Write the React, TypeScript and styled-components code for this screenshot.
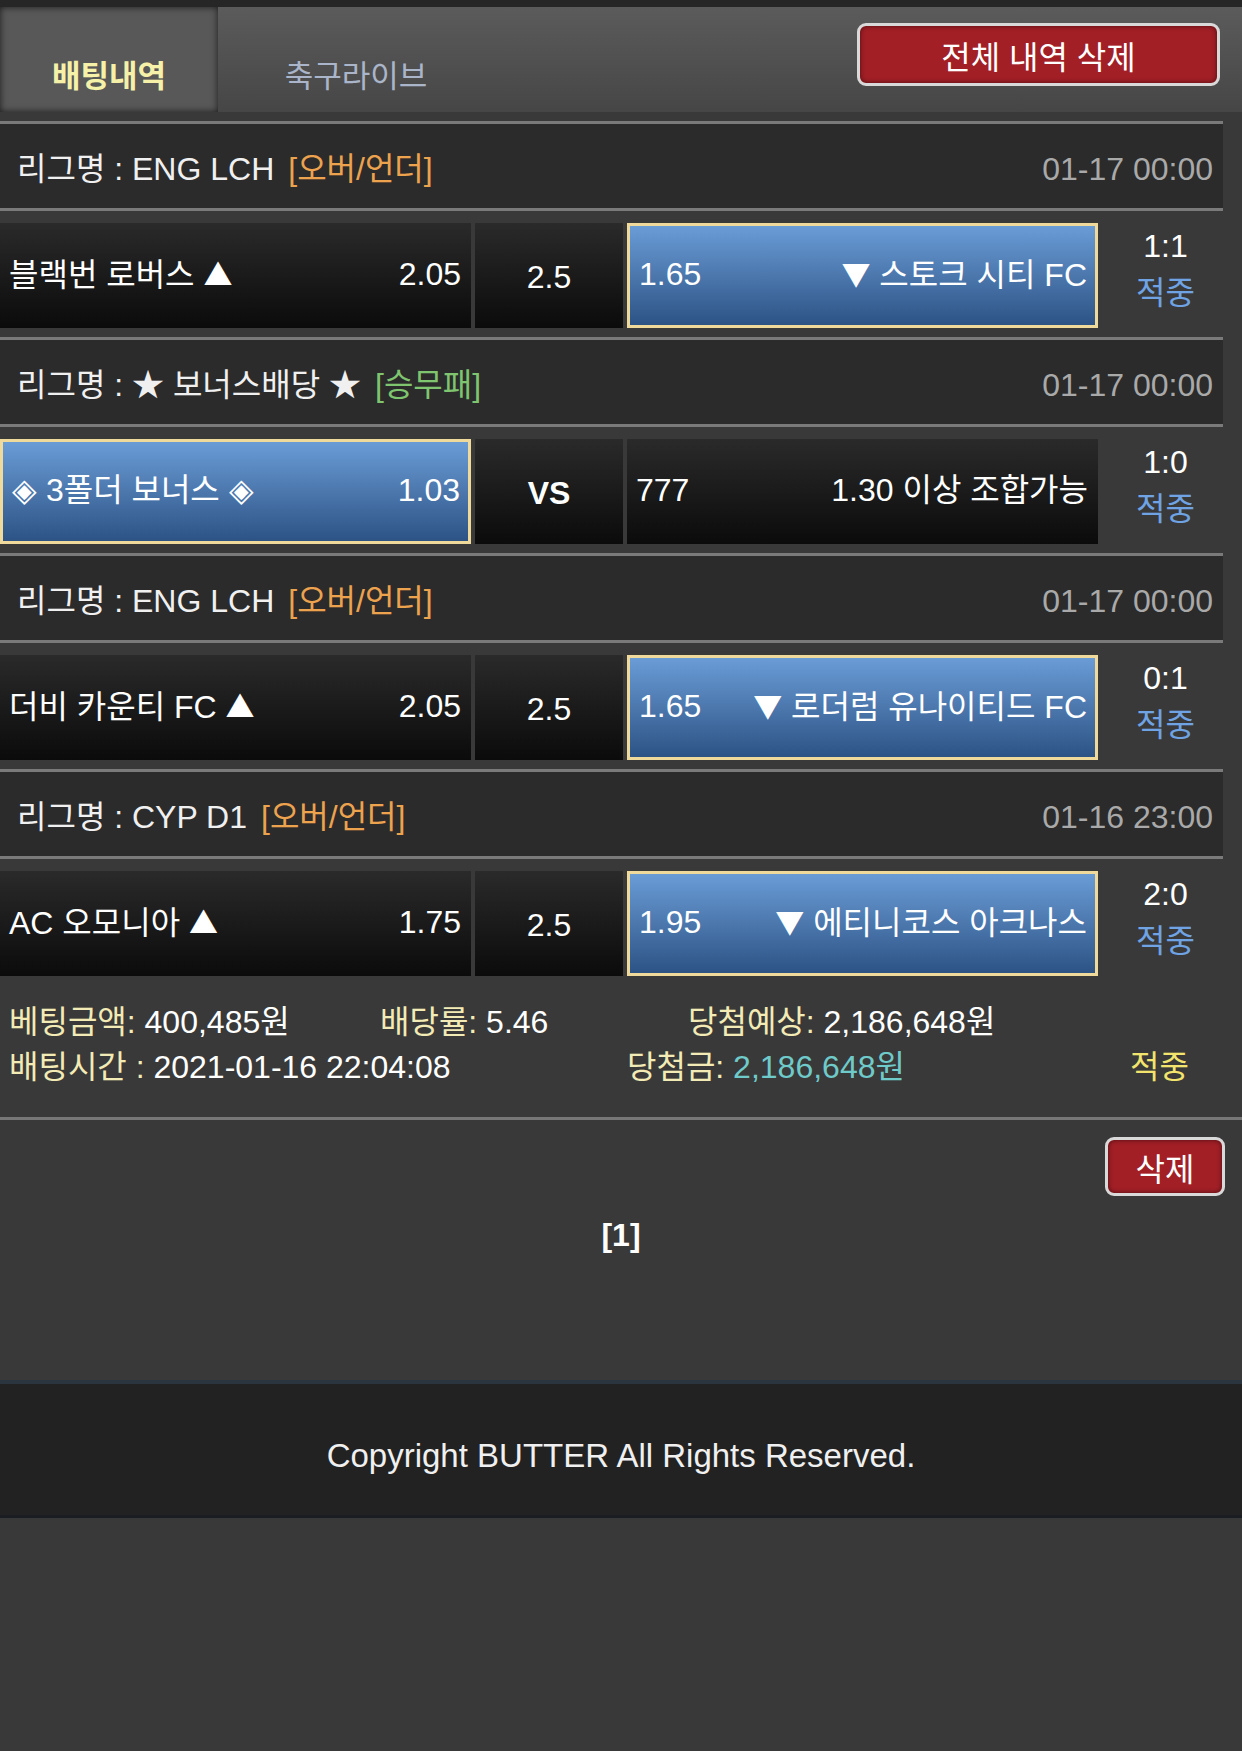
import React from "react";
import styled, { createGlobalStyle, css } from "styled-components";

const GlobalStyle = createGlobalStyle`
  html, body {
    margin: 0;
    padding: 0;
    background: #393939;
  }
  body {
    font-family: "Liberation Sans", "Noto Sans CJK KR", sans-serif;
    color: #fff;
  }
  * {
    box-sizing: border-box;
  }
`;

type Tone = "orange" | "green";

interface Bet {
  league: string;
  tag: string;
  tone: Tone;
  time: string;
  home: string;
  homeOdds: string;
  line: string;
  vs?: boolean;
  away: string;
  awayOdds: string;
  pick: "home" | "away";
  score: string;
  result: string;
}

const bets: Bet[] = [
  {
    league: "리그명 : ENG LCH",
    tag: "[오버/언더]",
    tone: "orange",
    time: "01-17 00:00",
    home: "블랙번 로버스 ▲",
    homeOdds: "2.05",
    line: "2.5",
    away: "▼ 스토크 시티 FC",
    awayOdds: "1.65",
    pick: "away",
    score: "1:1",
    result: "적중",
  },
  {
    league: "리그명 : ★ 보너스배당 ★",
    tag: "[승무패]",
    tone: "green",
    time: "01-17 00:00",
    home: "◈ 3폴더 보너스 ◈",
    homeOdds: "1.03",
    line: "VS",
    vs: true,
    away: "1.30 이상 조합가능",
    awayOdds: "777",
    pick: "home",
    score: "1:0",
    result: "적중",
  },
  {
    league: "리그명 : ENG LCH",
    tag: "[오버/언더]",
    tone: "orange",
    time: "01-17 00:00",
    home: "더비 카운티 FC ▲",
    homeOdds: "2.05",
    line: "2.5",
    away: "▼ 로더럼 유나이티드 FC",
    awayOdds: "1.65",
    pick: "away",
    score: "0:1",
    result: "적중",
  },
  {
    league: "리그명 : CYP D1",
    tag: "[오버/언더]",
    tone: "orange",
    time: "01-16 23:00",
    home: "AC 오모니아 ▲",
    homeOdds: "1.75",
    line: "2.5",
    away: "▼ 에티니코스 아크나스",
    awayOdds: "1.95",
    pick: "away",
    score: "2:0",
    result: "적중",
  },
];

// the arrows look bigger in the original, so draw them from the CJK face
const ARROWS = /([▲▼])/g;
function withArrows(text: string) {
  return text
    .split(ARROWS)
    .map((part, i) => (i % 2 === 1 ? <Arrow key={i}>{part}</Arrow> : part));
}

export default function App() {
  return (
    <>
      <GlobalStyle />
      <Page>
        <TopStrip />
        <TabBar>
          <Tab $active $width={218}>
            배팅내역
          </Tab>
          <Tab $width={276}>축구라이브</Tab>
          <DangerButton $width={363} $height={63} $wide>
            전체 내역 삭제
          </DangerButton>
        </TabBar>

        <List>
          {bets.map((bet, i) => (
            <BetItem key={i}>
              <LeagueHeader>
                <LeagueName>
                  {bet.league}
                  <Tag $tone={bet.tone}>{bet.tag}</Tag>
                </LeagueName>
                <Time>{bet.time}</Time>
              </LeagueHeader>
              <MatchRow>
                <Cell $picked={bet.pick === "home"}>
                  <span>{withArrows(bet.home)}</span>
                  <span>{bet.homeOdds}</span>
                </Cell>
                <LineCell $bold={bet.vs}>{bet.line}</LineCell>
                <Cell $picked={bet.pick === "away"}>
                  <span>{bet.awayOdds}</span>
                  <span>{withArrows(bet.away)}</span>
                </Cell>
                <Result>
                  <Score>{bet.score}</Score>
                  <Hit>{bet.result}</Hit>
                </Result>
              </MatchRow>
            </BetItem>
          ))}
        </List>

        <Summary>
          <SummaryRow>
            <Field $width={371}>
              <Label>베팅금액:</Label> 400,485원
            </Field>
            <Field $width={308}>
              <Label>배당률:</Label> 5.46
            </Field>
            <Field>
              <Label>당첨예상:</Label> 2,186,648원
            </Field>
          </SummaryRow>
          <SummaryRow>
            <Field $width={618}>
              <Label>배팅시간 :</Label> 2021-01-16 22:04:08
            </Field>
            <Field $width={503}>
              <Label>당첨금:</Label> <Winnings>2,186,648원</Winnings>
            </Field>
            <Field>
              <Status>적중</Status>
            </Field>
          </SummaryRow>
        </Summary>

        <Divider />

        <Actions>
          <DangerButton $width={120} $height={59}>
            삭제
          </DangerButton>
        </Actions>

        <Pager>[1]</Pager>

        <Footer>Copyright BUTTER All Rights Reserved.</Footer>
      </Page>
    </>
  );
}

const Arrow = styled.span`
  font-family: "Noto Sans CJK KR", sans-serif;
  font-size: 29px;
`;

const Page = styled.div`
  min-height: 1751px;
  background: #393939;
  display: flex;
  flex-direction: column;
`;

const TopStrip = styled.div`
  height: 7px;
  background: #262626;
`;

const TabBar = styled.div`
  height: 105px;
  display: flex;
  background: linear-gradient(#5b5b5b, #464646);
`;

const Tab = styled.div<{ $active?: boolean; $width: number }>`
  width: ${({ $width }) => $width}px;
  display: flex;
  align-items: center;
  justify-content: center;
  padding-top: 28px;
  font-size: 31px;
  color: #aab5c9;

  ${({ $active }) =>
    $active &&
    css`
      background: #585858;
      box-shadow: inset 0 0 7px rgba(0, 0, 0, 0.7);
      color: #f6f1a8;
      font-weight: bold;
    `}
`;

const DangerButton = styled.button<{
  $width: number;
  $height: number;
  $wide?: boolean;
}>`
  width: ${({ $width }) => $width}px;
  height: ${({ $height }) => $height}px;
  flex: none;
  padding: 0;
  border: 3px solid #d9d9d9;
  border-radius: 9px;
  background: #a21f26;
  box-shadow: inset 0 0 5px rgba(0, 0, 0, 0.55);
  color: #fff;
  font-family: inherit;
  font-size: 32px;

  ${({ $wide }) =>
    $wide &&
    css`
      margin: 16px 22px 0 auto;
    `}
`;

const List = styled.div`
  width: 1223px;
  padding-top: 9px;
`;

const BetItem = styled.div``;

const LeagueHeader = styled.div`
  height: 90px;
  display: flex;
  align-items: center;
  justify-content: space-between;
  padding: 0 10px 0 17px;
  border-top: 3px solid #7a7a7a;
  border-bottom: 3px solid #7a7a7a;
  background: #2b2b2b;
  font-size: 32px;
  color: #f0f0f0;
`;

const LeagueName = styled.div`
  white-space: nowrap;
`;

const Tag = styled.span<{ $tone: Tone }>`
  margin-left: 14px;
  color: ${({ $tone }) => ($tone === "green" ? "#7fc46f" : "#eda24e")};
`;

const Time = styled.div`
  padding-top: 6px;
  color: #a9a9a9;
`;

const MatchRow = styled.div`
  display: grid;
  grid-template-columns: 471px 148px 471px 1fr;
  column-gap: 4px;
  height: 105px;
  margin: 12px 0 9px;
`;

const Cell = styled.div<{ $picked?: boolean }>`
  display: flex;
  align-items: center;
  justify-content: space-between;
  padding: 0 10px 4px 9px;
  background: linear-gradient(#2a2a2a, #0b0b0b);
  font-size: 32px;
  line-height: 40px;
  color: #fff;
  white-space: nowrap;

  ${({ $picked }) =>
    $picked &&
    css`
      padding: 0 8px 4px 9px;
      border: 3px solid #efd99b;
      background: linear-gradient(#6a9cd6, #2d5385);
    `}
`;

const LineCell = styled.div<{ $bold?: boolean }>`
  display: flex;
  align-items: center;
  justify-content: center;
  padding-top: 3px;
  background: linear-gradient(#2a2a2a, #0b0b0b);
  font-size: 32px;
  font-weight: ${({ $bold }) => ($bold ? "bold" : "normal")};
`;

const Result = styled.div`
  display: flex;
  flex-direction: column;
  align-items: center;
  padding-left: 6px;
  font-size: 32px;
  line-height: 47px;
`;

const Score = styled.div`
  color: #fff;
`;

const Hit = styled.div`
  color: #6fa3e3;
`;

const Summary = styled.div`
  padding: 11px 0 31px 9px;
  font-size: 32px;
  color: #fff;
`;

const SummaryRow = styled.div`
  display: flex;
  align-items: center;
  height: 45px;
`;

const Field = styled.div<{ $width?: number }>`
  flex: none;
  width: ${({ $width }) => ($width ? `${$width}px` : "auto")};
  white-space: nowrap;
`;

const Label = styled.span`
  color: #f3ebb6;
`;

const Winnings = styled.span`
  color: #6fcaca;
`;

const Status = styled.span`
  color: #f2e46c;
`;

const Divider = styled.div`
  border-top: 3px solid #777;
`;

const Actions = styled.div`
  display: flex;
  justify-content: flex-end;
  padding: 17px 17px 0 0;
`;

const Pager = styled.div`
  margin-top: 19px;
  line-height: 40px;
  text-align: center;
  font-size: 32px;
  font-weight: bold;
  color: #fff;
`;

const Footer = styled.div`
  margin-top: 125px;
  height: 138px;
  display: flex;
  align-items: center;
  justify-content: center;
  padding-top: 12px;
  border-top: 4px solid #2b3540;
  border-bottom: 3px solid #1a1e23;
  background: #222;
  font-size: 33px;
  color: #f0f0f0;
`;
